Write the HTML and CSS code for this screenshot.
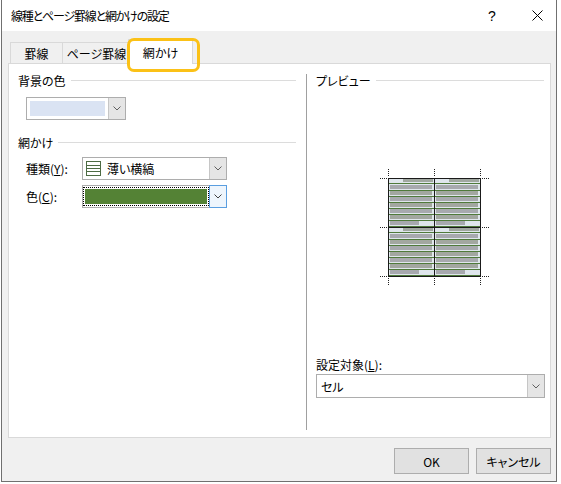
FILE: index.html
```html
<!DOCTYPE html>
<html lang="ja">
<head>
<meta charset="utf-8">
<title>線種とページ罫線と網かけの設定</title>
<link rel="stylesheet" href="styles.css">
</head>
<body>
<div class="window">
  <div class="titlebar">
    <span class="title">線種とページ罫線と網かけの設定</span>
    <span class="help">?</span>
    <span class="close"><svg width="11" height="11" viewBox="0 0 11 11"><path d="M0.5 0.5 L10.5 10.5 M10.5 0.5 L0.5 10.5" stroke="#000" stroke-width="1" fill="none"/></svg></span>
  </div>
  <div class="tabs">
    <div class="tab t1">罫線</div>
    <div class="tab t2">ページ罫線</div>
    <div class="tab active">網かけ</div>
  </div>
  <div class="panel">
    <div class="col-left">
      <div class="group"><span>背景の色</span><i class="rule"></i></div>
      <div class="combo bgcombo">
        <div class="value"><span class="swatch blue"></span></div>
        <div class="drop"><svg width="8" height="5" viewBox="0 0 8 5"><path d="M0.5 0.5 L4 4 L7.5 0.5" fill="none" stroke="#606060"/></svg></div>
      </div>
      <div class="group g2"><span>網かけ</span><i class="rule"></i></div>
      <div class="row">
        <span class="lbl">種類(<u>Y</u>):</span>
        <div class="combo wide">
          <div class="value pad">
            <svg class="pat-icon" width="15" height="15" viewBox="0 0 15 15"><rect x="0.5" y="0.5" width="14" height="14" fill="#fff" stroke="#4d6b44"/><path d="M1 4.5H14M1 7.5H14M1 10.5H14" stroke="#4d6b44"/></svg>
            <span>薄い横縞</span>
          </div>
          <div class="drop"><svg width="8" height="5" viewBox="0 0 8 5"><path d="M0.5 0.5 L4 4 L7.5 0.5" fill="none" stroke="#606060"/></svg></div>
        </div>
      </div>
      <div class="row r2">
        <span class="lbl">色(<u>C</u>):</span>
        <div class="combo wide focus">
          <div class="value"><span class="swatch green"></span></div>
          <div class="drop"><svg width="8" height="5" viewBox="0 0 8 5"><path d="M0.5 0.5 L4 4 L7.5 0.5" fill="none" stroke="#404040"/></svg></div>
        </div>
      </div>
    </div>
    <div class="sep"></div>
    <div class="col-right">
      <div class="group"><span>プレビュー</span><i class="rule"></i></div>
      <svg class="preview" width="228" height="269" viewBox="0 0 228 269">
        <defs>
          <g id="cell">
            <rect width="46" height="49" fill="#dfe6ec"/>
            <rect x="15" y="1" width="30" height="3" fill="#a0a7a0"/>
            <rect x="0" y="5" width="46" height="1" fill="#4f7a3a"/>
            <rect x="0" y="12" width="46" height="1" fill="#4f7a3a"/>
            <rect x="0" y="18" width="46" height="1" fill="#4f7a3a"/>
            <rect x="0" y="24" width="46" height="1" fill="#4f7a3a"/>
            <rect x="0" y="30" width="46" height="1" fill="#4f7a3a"/>
            <rect x="0" y="36" width="46" height="1" fill="#4f7a3a"/>
            <rect x="0" y="42" width="46" height="1" fill="#4f7a3a"/>
            <rect x="0" y="48" width="46" height="1" fill="#4f7a3a"/>
            <rect x="2" y="7" width="42" height="4" fill="#a7a9ae"/>
            <rect x="2" y="13" width="42" height="4" fill="#a2a7a0"/>
            <rect x="2" y="19" width="42" height="4" fill="#a7a9ae"/>
            <rect x="2" y="25" width="42" height="4" fill="#a2a7a0"/>
            <rect x="2" y="31" width="42" height="4" fill="#a7a9ae"/>
            <rect x="2" y="37" width="42" height="4" fill="#a2a7a0"/>
            <rect x="2" y="43" width="29" height="4" fill="#a7a9ae"/>
          </g>
        </defs>
        <use href="#cell" x="72" y="90"/>
        <use href="#cell" x="118" y="90"/>
        <use href="#cell" x="72" y="139"/>
        <use href="#cell" x="118" y="139"/>
        <rect x="72.5" y="90.5" width="92" height="98" fill="none" stroke="#1a1a1a"/>
        <path d="M118.5 90 V189 M72 139.5 H165" stroke="#1a1a1a" fill="none"/>
        <g stroke="#222" stroke-dasharray="1 1" fill="none">
          <path d="M64 90.5H71 M64 139.5H71 M64 188.5H71"/>
          <path d="M166 90.5H173 M166 139.5H173 M166 188.5H173"/>
          <path d="M72.5 81V88 M118.5 81V88 M164.5 81V88"/>
          <path d="M72.5 190V197 M118.5 190V197 M164.5 190V197"/>
        </g>
      </svg>
      <div class="target-label">設定対象(<u>L</u>):</div>
      <div class="combo target">
        <div class="value pad">セル</div>
        <div class="drop"><svg width="8" height="5" viewBox="0 0 8 5"><path d="M0.5 0.5 L4 4 L7.5 0.5" fill="none" stroke="#606060"/></svg></div>
      </div>
    </div>
  </div>
  <div class="buttons">
    <div class="btn">OK</div>
    <div class="btn">キャンセル</div>
  </div>
</div>
</body>
</html>
```
FILE: styles.css
```css
* { box-sizing: border-box; }
html, body { margin: 0; padding: 0; }
body {
  width: 561px;
  height: 484px;
  overflow: hidden;
  background: #fff;
  font-family: "Noto Sans CJK JP", "Noto Sans", sans-serif;
  font-size: 12px;
  color: #000;
  font-feature-settings: "palt";
}
.window {
  margin-left: 1px;
  width: 556px;
  height: 482px;
  border: 1px solid #707070;
  border-top: 0;
  background: #f0f0f0;
  display: flex;
  flex-direction: column;
}
.titlebar {
  flex: none;
  height: 31px;
  background: #fff;
  display: flex;
  align-items: center;
  padding: 0 9px;
}
.title { flex: 1; letter-spacing: -1.2px; }
.help {
  width: 20px;
  margin-right: 25px;
  text-align: center;
  font-family: "Liberation Sans", sans-serif;
  font-size: 14px;
}
.close { width: 20px; display: flex; justify-content: center; }

.tabs {
  flex: none;
  height: 33px;
  margin-bottom: -1px;
  display: flex;
  align-items: flex-end;
  padding-left: 8px;
  position: relative;
  z-index: 1;
}
.tab {
  height: 22px;
  display: flex;
  align-items: center;
  justify-content: center;
  border: 1px solid #d9d9d9;
  border-right: 0;
  background: #f0f0f0;
}
.t1 { width: 52px; }
.t2 { width: 68px; }
.tab.active {
  width: 65px;
  height: 25px;
  margin-left: -2px;
  background: #fff;
  border-right: 1px solid #d9d9d9;
  border-bottom: 0;
  position: relative;
}
.tab.active::after {
  content: "";
  position: absolute;
  left: -2px;
  top: -2px;
  width: 67px;
  height: 28px;
  border: 3px solid #fbc117;
  border-radius: 7px;
}

.panel {
  flex: none;
  margin-left: 6px;
  width: 543px;
  height: 375px;
  background: #fff;
  border: 1px solid #d9d9d9;
  display: flex;
  padding: 0 6px 0 9px;
}
.col-left { width: 278px; flex: none; }
.col-right { width: 228px; flex: none; display: flex; flex-direction: column; }
.group {
  display: flex;
  align-items: center;
  height: 16px;
  margin-top: 8px;
}
.group .rule {
  flex: 1;
  height: 1px;
  background: #dcdcdc;
  margin-left: 5px;
}
.g2 { margin-top: 14px; }
.sep {
  flex: none;
  width: 1px;
  height: 356px;
  background: #a0a0a0;
  margin: 10px 9px 0 10px;
}

.combo {
  display: flex;
  border: 1px solid #adadad;
  background: #fff;
}
.combo .value {
  flex: 1;
  display: flex;
  align-items: center;
  min-width: 0;
}
.combo .value.pad { padding-left: 3px; }
.combo .drop {
  flex: none;
  width: 17px;
  background: #e5e5e5;
  border-left: 1px solid #c6c6c6;
  display: flex;
  align-items: center;
  justify-content: center;
}
.combo.focus .drop {
  background: #eef5fc;
  border: 1px solid #5a9ee0;
  margin: -1px -1px -1px 0;
  width: 18px;
}
.bgcombo { margin: 9px 0 0 8px; width: 100px; height: 23px; }
.wide { width: 145px; height: 23px; }
.target { width: 229px; height: 24px; }
.target .value.pad { padding-left: 4px; }

.swatch { flex: 1; height: 15px; margin: 0 3px; }
.swatch.blue { background: #dae3f3; }
.swatch.green {
  background: #548235;
  height: 17px;
  margin: 0 1px 0 1px;
  outline: 1px dotted #000;
  outline-offset: 0;
  border: 1px solid #fff;
}
.pat-icon { margin-right: 6px; flex: none; }

.row {
  display: flex;
  align-items: center;
  margin: 7px 0 0 8px;
}
.r2 { margin-top: 5px; }
.lbl { width: 56px; flex: none; }

.preview { display: block; flex: none; }
.target-label { height: 16px; line-height: 16px; margin-bottom: 1px; }

.buttons {
  flex: none;
  display: flex;
  justify-content: flex-end;
  gap: 7px;
  margin-top: 10px;
  padding-right: 5px;
}
.btn {
  width: 75px;
  height: 26px;
  background: #e1e1e1;
  border: 1px solid #adadad;
  display: flex;
  align-items: center;
  justify-content: center;
}
```
